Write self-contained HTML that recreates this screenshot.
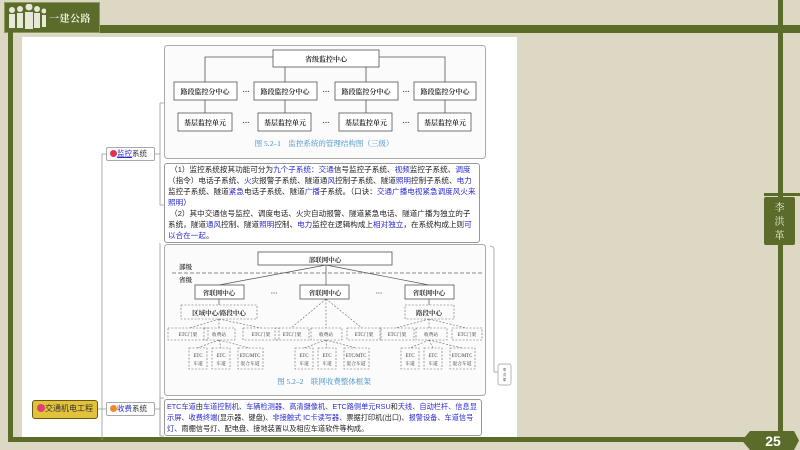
<!DOCTYPE html>
<html><head><meta charset="utf-8"><style>
*{margin:0;padding:0;box-sizing:border-box}
body{width:800px;height:450px;overflow:hidden;background:#dcd8c3;position:relative;font-family:"Liberation Sans","Noto Sans CJK SC",sans-serif}
.a{position:absolute}
.blue{color:#2a2ad0}
.t{font-size:7.6px;line-height:11px;color:#222}
</style></head><body>
<!-- frame -->
<div class="a" style="left:98px;top:25px;width:702px;height:8px;background:#5a6b2a"></div>
<div class="a" style="left:4px;top:2px;width:96px;height:31px;background:#5a6b2a;border:1px solid #8a9a5a"></div>
<div class="a" style="left:8px;top:30px;width:5px;height:412px;background:#5a6b2a"></div>
<div class="a" style="left:8px;top:437px;width:740px;height:5px;background:#5a6b2a"></div>
<div class="a" style="left:778px;top:0;width:5px;height:436px;background:#5a6b2a"></div>
<div class="a" style="left:22px;top:37px;width:495px;height:400px;background:#fff"></div>
<svg class="a" style="left:6px;top:4px" width="40" height="26" viewBox="0 0 40 26" fill="#e8e8d8">
<circle cx="6" cy="6" r="3"/><rect x="3" y="10" width="6" height="14"/>
<circle cx="14" cy="5" r="3"/><rect x="11" y="9" width="6" height="15"/>
<circle cx="23" cy="3" r="3.5"/><rect x="19" y="8" width="8" height="17"/>
<circle cx="31" cy="5" r="3"/><rect x="28" y="9" width="6" height="15"/>
<circle cx="38" cy="7" r="2.5"/><rect x="36" y="11" width="4" height="12"/></svg>
<div class="a" style="left:49px;top:10px;color:#f0f0e0;font-size:10px;font-weight:bold;letter-spacing:0.5px;font-family:'Noto Serif CJK SC',serif">一建公路</div>
<div class="a" style="left:764px;top:197px;width:31px;height:48px;background:#5a6b2a;border-radius:2px;color:#f0f0e0;font-size:10px;line-height:14px;text-align:center;padding-top:3px;font-family:'Noto Serif CJK SC',serif">李<br>洪<br>革</div>
<div class="a" style="left:764px;top:193px;width:36px;height:3px;background:#5a6b2a"></div>
<svg class="a" style="left:742px;top:431px" width="58" height="19"><polygon points="0,9.5 8,0 52,0 57,9.5 52,19 8,19" fill="#5a6b2a"/><text x="31" y="15" fill="#fff" font-size="14" font-weight="bold" font-family="Liberation Sans" text-anchor="middle">25</text></svg>

<!-- mind map connectors -->
<svg class="a" style="left:0;top:0" width="520" height="450">
<g stroke="#999" fill="none" stroke-width="0.8">
<path d="M98,409 H106"/>
<path d="M102,154 V440"/><path d="M102,154 H106"/>
<path d="M155,154 H160 M160,103 V205 M160,103 H164 M160,205 H164"/>
<path d="M155,409 H160 M160,398 V436 M160,398 H164 M160,436 H164"/>
<path d="M160,243 V436"/>
<path d="M490,246 Q494,246 494,250 V372 H498"/>
</g>
<rect x="498" y="364" width="13" height="21" rx="2" fill="#fff" stroke="#999" stroke-width="0.7"/>
<text x="504.5" y="371" font-size="3.5" text-anchor="middle" fill="#555">李</text>
<text x="504.5" y="376" font-size="3.5" text-anchor="middle" fill="#555">洪</text>
<text x="504.5" y="381" font-size="3.5" text-anchor="middle" fill="#555">革</text>
</svg>

<!-- nodes -->
<div class="a" style="left:32px;top:400px;width:66px;height:19px;background:#e2c23a;border:1.5px solid #6b5a10;border-radius:3px;font-size:8px;line-height:16px;padding-left:4px;color:#333"><span style="display:inline-block;width:8px;height:8px;border-radius:50%;background:#e04070;vertical-align:-1px"></span>交通机电工程</div>
<div class="a" style="left:106px;top:147px;width:49px;height:14px;background:#fff;border:1px solid #aaa;border-radius:2px;font-size:7.5px;line-height:12px;padding-left:3px;color:#333"><span style="display:inline-block;width:7px;height:7px;border-radius:50%;background:#e03050;vertical-align:-1px"></span><span class="blue" style="text-decoration:underline">监控</span>系统</div>
<div class="a" style="left:106px;top:402px;width:49px;height:14px;background:#fff;border:1px solid #aaa;border-radius:2px;font-size:7.5px;line-height:12px;padding-left:3px;color:#333"><span style="display:inline-block;width:7px;height:7px;border-radius:50%;background:#f08830;vertical-align:-1px"></span><span class="blue">收费</span>系统</div>

<!-- fig1 -->
<svg class="a" style="left:164px;top:45px" width="323" height="115" font-family="Liberation Serif,Noto Serif CJK SC,serif">
<rect x="0.5" y="0.5" width="321" height="113" rx="3" fill="#fbfbfb" stroke="#aaa"/>
<g stroke="#555" fill="none" stroke-width="0.8">
<path d="M41,37 V12 H109 M215,12 H281 V37 M121,22 V37 M202,22 V37 M41,55 V68 M121,55 V68 M202,55 V68 M281,55 V68"/>
</g>
<g fill="#fff" stroke="#555" stroke-width="0.8">
<rect x="109" y="5" width="106" height="17"/>
<rect x="10" y="37" width="63" height="18"/><rect x="90" y="37" width="63" height="18"/><rect x="171" y="37" width="63" height="18"/><rect x="250" y="37" width="62" height="18"/>
<rect x="14" y="68" width="54" height="18"/><rect x="94" y="68" width="53" height="18"/><rect x="175" y="68" width="53" height="18"/><rect x="254" y="68" width="53" height="18"/>
</g>
<g font-size="7" font-weight="bold" fill="#333" text-anchor="middle">
<text x="162" y="16.5">省级监控中心</text>
<text x="41" y="49">路段监控分中心</text><text x="121" y="49">路段监控分中心</text><text x="202" y="49">路段监控分中心</text><text x="281" y="49">路段监控分中心</text>
<text x="41" y="80">基层监控单元</text><text x="121" y="80">基层监控单元</text><text x="202" y="80">基层监控单元</text><text x="281" y="80">基层监控单元</text>
<text x="82" y="49">···</text><text x="162" y="49">···</text><text x="242" y="49">···</text>
<text x="82" y="80">···</text><text x="162" y="80">···</text><text x="242" y="80">···</text>
</g>
<text x="160" y="101" font-size="7.5" fill="#3b8cc8" text-anchor="middle">图 5.2–1　监控系统的管理结构图（三级）</text>
</svg>

<!-- text box 1 -->
<div class="a t" style="left:164px;top:163px;width:316px;height:80px;border:1px solid #999;border-radius:3px;padding:0 3px;background:#fff">
&nbsp;（1）监控系统按其功能可分为<span class="blue">九个子系统</span>：<span class="blue">交通</span>信号监控子系统、<span class="blue">视频</span>监控子系统、<span class="blue">调度</span>（指令）电话子系统、<span class="blue">火</span>灾报警子系统、隧道通<span class="blue">风</span>控制子系统、隧道<span class="blue">照明</span>控制子系统、<span class="blue">电力</span>监控子系统、隧道<span class="blue">紧急</span>电话子系统、隧道<span class="blue">广播</span>子系统。（口诀：<span class="blue">交通广播电视紧急调度风火来照明</span>）<br>
&nbsp;（2）其中交通信号监控、调度电话、火灾自动报警、隧道紧急电话、隧道广播为独立的子系统，隧道<span class="blue">通风</span>控制、隧道<span class="blue">照明</span>控制、<span class="blue">电力</span>监控在逻辑构成上<span class="blue">相对独立</span>，在系统构成上则<span class="blue">可以合在一起</span>。
</div>

<!-- fig2 -->
<svg class="a" style="left:164px;top:244px" width="323" height="153" font-family="Liberation Serif,Noto Serif CJK SC,serif">
<rect x="0.5" y="0.5" width="321" height="151" rx="3" fill="#fbfbfb" stroke="#aaa"/>
<g stroke="#555" fill="none" stroke-width="0.7">
<path d="M162,21 L55,41 M162,21 V41 M162,21 L265,41 M55,55 V61 M265,55 V61"/>
</g>
<line x1="8" y1="29" x2="318" y2="29" stroke="#666" stroke-width="0.8" stroke-dasharray="4,2"/>
<g fill="#fff" stroke="#555" stroke-width="0.8">
<rect x="94" y="8" width="134" height="13"/>
<rect x="31" y="41" width="49" height="14"/><rect x="136" y="41" width="49" height="14"/><rect x="241" y="41" width="49" height="14"/>
</g>
<g fill="none" stroke="#666" stroke-width="0.6" stroke-dasharray="2,1.5">
<rect x="17" y="61" width="76" height="14"/><rect x="241" y="61" width="49" height="14"/>
<path d="M55,75 L25,84 M55,75 V84 M55,75 L97,84 M162,55 L127,84 M162,55 V84 M162,55 L198,84 M265,75 L232,84 M265,75 V84 M265,75 L302,84"/>
<path d="M55,96 L33,104 M55,96 L57,104 M55,96 L86,104 M162,96 L140,104 M162,96 L163,104 M162,96 L192,104 M265,96 L246,104 M265,96 L269,104 M265,96 L298,104"/>
<rect x="4" y="84" width="40" height="12"/><rect x="40" y="84" width="31" height="12"/><rect x="79" y="84" width="36" height="12"/>
<rect x="111" y="84" width="34" height="12"/><rect x="147" y="84" width="31" height="12"/><rect x="183" y="84" width="34" height="12"/>
<rect x="216" y="84" width="34" height="12"/><rect x="252" y="84" width="31" height="12"/><rect x="288" y="84" width="30" height="12"/>
<rect x="25" y="104" width="18" height="21"/><rect x="48" y="104" width="18" height="21"/><rect x="74" y="104" width="25" height="21"/>
<rect x="131" y="104" width="18" height="21"/><rect x="154" y="104" width="18" height="21"/><rect x="180" y="104" width="25" height="21"/>
<rect x="237" y="104" width="18" height="21"/><rect x="260" y="104" width="18" height="21"/><rect x="286" y="104" width="25" height="21"/>
</g>
<g font-size="6.5" font-weight="bold" fill="#333">
<text x="15" y="25">部级</text><text x="15" y="38">省级</text>
<g text-anchor="middle">
<text x="161" y="18">部联网中心</text>
<text x="55" y="51">省联网中心</text><text x="161" y="51">省联网中心</text><text x="265" y="51">省联网中心</text>
<text x="110" y="51">···</text><text x="215" y="51">···</text>
<text x="55" y="71">区域中心/路段中心</text><text x="265" y="71">路段中心</text>
</g></g>
<g font-size="4.8" fill="#333" text-anchor="middle">
<text x="24" y="92">ETC门架</text><text x="55" y="92">收费站</text><text x="97" y="92">ETC门架</text>
<text x="128" y="92">ETC门架</text><text x="162" y="92">收费站</text><text x="200" y="92">ETC门架</text>
<text x="233" y="92">ETC门架</text><text x="267" y="92">收费站</text><text x="303" y="92">ETC门架</text>
<text x="34" y="113">ETC</text><text x="34" y="121">车道</text><text x="57" y="113">ETC</text><text x="57" y="121">车道</text><text x="86" y="113">ETC/MTC</text><text x="86" y="121">混合车道</text>
<text x="140" y="113">ETC</text><text x="140" y="121">车道</text><text x="163" y="113">ETC</text><text x="163" y="121">车道</text><text x="192" y="113">ETC/MTC</text><text x="192" y="121">混合车道</text>
<text x="246" y="113">ETC</text><text x="246" y="121">车道</text><text x="269" y="113">ETC</text><text x="269" y="121">车道</text><text x="298" y="113">ETC/MTC</text><text x="298" y="121">混合车道</text>
</g>
<text x="160" y="140" font-size="7.5" fill="#3b8cc8" text-anchor="middle">图 5.2–2　联网收费整体框架</text>
</svg>

<!-- bottom text -->
<div class="a t" style="left:164px;top:399px;width:318px;height:37px;border:1px solid #999;border-radius:3px;padding:1px 2px;background:#fff;font-size:7.2px;line-height:11px">
<span class="blue">ETC车道</span>由<span class="blue">车道控制机、车辆检测器、高清摄像机、ETC路侧单元RSU</span>和<span class="blue">天线、自动栏杆、信息显示屏、收费终端</span>(显示器、键盘)、<span class="blue">非接触式 IC卡读写器</span>、票据打印机(出口)、<span class="blue">报警设备、车道信号灯</span>、雨棚信号灯、配电盘、接地装置以及相应车道软件等构成。
</div>
</body></html>
